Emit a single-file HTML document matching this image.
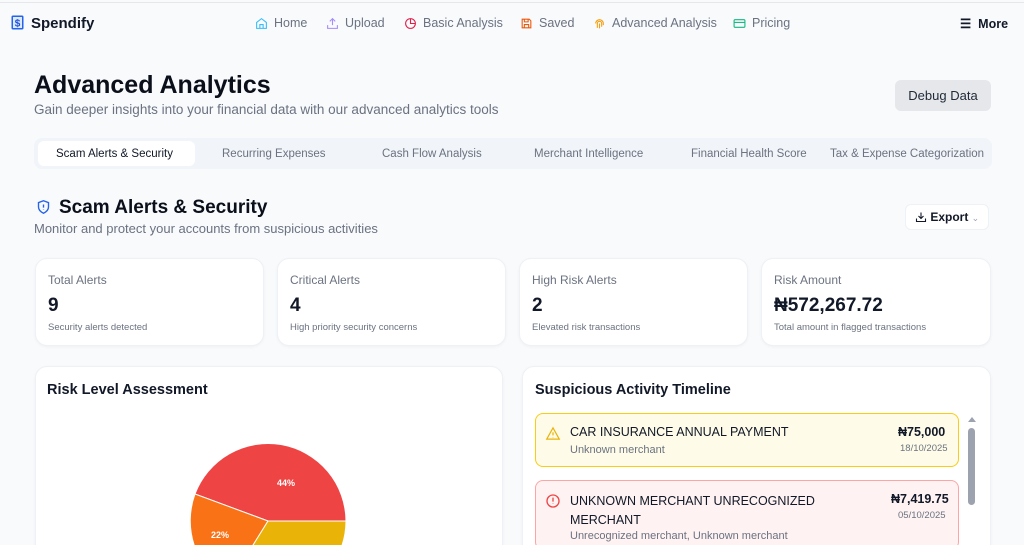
<!DOCTYPE html>
<html style="width:1024px;height:545px;overflow:hidden"><head><meta charset="utf-8"><style>
*{box-sizing:border-box;margin:0;padding:0}
body{width:1024px;height:545px;overflow:hidden;background:#f8fafc;font-family:"Liberation Sans",sans-serif;color:#0f172a;position:relative}
.a{position:absolute;white-space:nowrap}
.nav{font-size:12.5px;color:#6b7280}
.nav svg{vertical-align:-3px;margin-right:6px}
.card{position:absolute;background:#fff;border:1px solid #eef1f5;border-radius:12px;box-shadow:0 1px 3px rgba(0,0,0,.04)}
.card .t{position:absolute;left:12px;top:14px;font-size:12px;color:#6b7280}
.card .v{position:absolute;left:12px;top:36px;font-size:19px;font-weight:bold;color:#111827}
.card .s{position:absolute;left:12px;top:63px;font-size:9.5px;color:#6b7280}
.tab{position:absolute;top:148px;font-size:11.5px;color:#6b7280}
</style></head><body>
<div class="a" style="left:0;top:2px;width:1024px;height:1px;background:#e5e7eb"></div>
<svg class="a" style="left:11px;top:15px" width="13" height="15" viewBox="0 0 13 15"><rect x="0.5" y="0.5" width="12" height="14" rx="1.5" fill="#2563eb"/><rect x="2" y="2" width="9" height="11" fill="#dbeafe"/><text x="6.5" y="11.5" font-size="10" font-weight="bold" text-anchor="middle" fill="#1d4ed8" font-family="Liberation Sans">$</text></svg>
<div class="a" style="left:31px;top:15px;font-size:15px;font-weight:bold;color:#111827">Spendify</div>
<div class="a nav" style="left:255px;top:16px"><svg width="13" height="13" viewBox="0 0 24 24" fill="none" stroke="#38bdf8" stroke-width="2"><path d="M3 10l9-7 9 7v11H3z"/><path d="M9 21v-7h6v7"/></svg>Home</div>
<div class="a nav" style="left:326px;top:16px"><svg width="13" height="13" viewBox="0 0 24 24" fill="none" stroke="#a78bfa" stroke-width="2"><path d="M12 15V3M7 8l5-5 5 5M3 15v6h18v-6"/></svg>Upload</div>
<div class="a nav" style="left:404px;top:16px"><svg width="13" height="13" viewBox="0 0 24 24" fill="none" stroke="#e11d48" stroke-width="2"><circle cx="12" cy="12" r="9"/><path d="M12 3v9h9"/></svg>Basic Analysis</div>
<div class="a nav" style="left:520px;top:16px"><svg width="13" height="13" viewBox="0 0 24 24" fill="none" stroke="#ea580c" stroke-width="2"><path d="M4 4h13l3 3v13H4z"/><path d="M8 4v5h7V4M8 20v-6h8v6"/></svg>Saved</div>
<div class="a nav" style="left:593px;top:16px"><svg width="13" height="13" viewBox="0 0 24 24" fill="none" stroke="#f59e0b" stroke-width="2"><path d="M5 12a7 7 0 0114 0v3M8 20v-8a4 4 0 018 0v6M12 12v9"/></svg>Advanced Analysis</div>
<div class="a nav" style="left:733px;top:16px"><svg width="13" height="13" viewBox="0 0 24 24" fill="none" stroke="#10b981" stroke-width="2"><rect x="2" y="5" width="20" height="14" rx="2"/><path d="M2 10h20"/></svg>Pricing</div>
<div class="a" style="left:960px;top:16px;font-size:12.5px;font-weight:bold;color:#111827">☰&nbsp; More</div>

<div class="a" style="left:34px;top:71px;font-size:25px;font-weight:bold;color:#0b0f1a">Advanced Analytics</div>
<div class="a" style="left:34px;top:102px;font-size:13.5px;color:#6b7280">Gain deeper insights into your financial data with our advanced analytics tools</div>
<div class="a" style="left:895px;top:80px;width:96px;height:31px;background:#e5e7eb;border-radius:6px;font-size:13px;color:#1f2937;text-align:center;line-height:31px">Debug Data</div>

<div class="a" style="left:34px;top:138px;width:958px;height:31px;background:#f1f5f9;border-radius:8px"></div>
<div class="a" style="left:38px;top:141px;width:157px;height:25px;background:#fff;border-radius:6px"></div>
<div class="tab" style="left:56px;color:#111827">Scam Alerts &amp; Security</div>
<div class="tab" style="left:222px">Recurring Expenses</div>
<div class="tab" style="left:382px">Cash Flow Analysis</div>
<div class="tab" style="left:534px">Merchant Intelligence</div>
<div class="tab" style="left:691px">Financial Health Score</div>
<div class="tab" style="left:830px">Tax &amp; Expense Categorization</div>

<svg class="a" style="left:36px;top:199px" width="15" height="16" viewBox="0 0 24 24" fill="none" stroke="#2563eb" stroke-width="2.2"><path d="M12 2l8 3v7c0 5-4 8-8 10-4-2-8-5-8-10V5z"/><path d="M12 8v5M12 16v.5"/></svg>
<div class="a" style="left:59px;top:197px;font-size:19px;font-weight:bold;color:#0b0f1a">Scam Alerts &amp; Security</div>
<div class="a" style="left:34px;top:221px;font-size:13px;color:#6b7280">Monitor and protect your accounts from suspicious activities</div>
<div class="a" style="left:905px;top:204px;width:84px;height:26px;background:#fff;border:1px solid #eef1f5;border-radius:6px;font-size:12px;font-weight:bold;color:#111827;line-height:24px;padding-left:9px"><svg width="12" height="12" viewBox="0 0 24 24" fill="none" stroke="#111827" stroke-width="2.2" style="vertical-align:-2px"><path d="M12 3v12M7 10l5 5 5-5M3 15v6h18v-6"/></svg> Export <span style="color:#9ca3af;font-weight:normal;font-size:9px">&#8964;</span></div>

<div class="card" style="left:35px;top:258px;width:229px;height:88px"><div class="t">Total Alerts</div><div class="v">9</div><div class="s">Security alerts detected</div></div>
<div class="card" style="left:277px;top:258px;width:229px;height:88px"><div class="t">Critical Alerts</div><div class="v">4</div><div class="s">High priority security concerns</div></div>
<div class="card" style="left:519px;top:258px;width:229px;height:88px"><div class="t">High Risk Alerts</div><div class="v">2</div><div class="s">Elevated risk transactions</div></div>
<div class="card" style="left:761px;top:258px;width:230px;height:88px"><div class="t">Risk Amount</div><div class="v">₦572,267.72</div><div class="s">Total amount in flagged transactions</div></div>

<div class="card" style="left:35px;top:366px;width:468px;height:190px"></div>
<div class="a" style="left:47px;top:382px;font-size:14.5px;font-weight:bold;color:#111827">Risk Level Assessment</div>
<svg class="a" style="left:150px;top:420px" width="240" height="125" viewBox="150 420 240 125">
<path d="M268 521 L346 521 A78 78 0 0 0 195 494 Z" fill="#ef4444" stroke="#fff" stroke-width="1"/>
<path d="M268 521 L195 494 A78 78 0 0 0 227 587 Z" fill="#f97316" stroke="#fff" stroke-width="1"/>
<path d="M268 521 L227 587 A78 78 0 0 0 346 521 Z" fill="#eab308" stroke="#fff" stroke-width="1"/>
<text x="286" y="486" font-size="9" font-weight="bold" fill="#fff" text-anchor="middle" font-family="Liberation Sans">44%</text>
<text x="220" y="538" font-size="9" font-weight="bold" fill="#fff" text-anchor="middle" font-family="Liberation Sans">22%</text>
</svg>

<div class="card" style="left:522px;top:366px;width:469px;height:190px"></div>
<div class="a" style="left:535px;top:382px;font-size:14.5px;font-weight:bold;color:#111827">Suspicious Activity Timeline</div>
<div class="a" style="left:535px;top:413px;width:424px;height:54px;background:#fefce8;border:1px solid #facc15;border-radius:8px"></div>
<svg class="a" style="left:545px;top:426px" width="16" height="15" viewBox="0 0 24 24" fill="none" stroke="#eab308" stroke-width="2"><path d="M12 3L2 21h20z"/><path d="M12 10v5M12 18v.5"/></svg>
<div class="a" style="left:570px;top:425px;font-size:12.5px;color:#111827">CAR INSURANCE ANNUAL PAYMENT</div>
<div class="a" style="left:570px;top:444px;font-size:11px;color:#6b7280">Unknown merchant</div>
<div class="a" style="left:898px;top:425px;font-size:12.5px;font-weight:bold;color:#111827">₦75,000</div>
<div class="a" style="left:900px;top:443px;font-size:9.5px;color:#6b7280">18/10/2025</div>

<div class="a" style="left:535px;top:480px;width:424px;height:70px;background:#fef2f2;border:1px solid #fca5a5;border-radius:8px"></div>
<svg class="a" style="left:545px;top:493px" width="16" height="16" viewBox="0 0 24 24" fill="none" stroke="#ef4444" stroke-width="2"><circle cx="12" cy="12" r="9"/><path d="M12 7v6M12 16v.5"/></svg>
<div class="a" style="left:570px;top:492px;font-size:12.5px;color:#111827;line-height:19px">UNKNOWN MERCHANT UNRECOGNIZED<br>MERCHANT</div>
<div class="a" style="left:570px;top:530px;font-size:11px;color:#6b7280">Unrecognized merchant, Unknown merchant</div>
<div class="a" style="left:891px;top:492px;font-size:12.5px;font-weight:bold;color:#111827">₦7,419.75</div>
<div class="a" style="left:898px;top:510px;font-size:9.5px;color:#6b7280">05/10/2025</div>

<div class="a" style="left:968px;top:417px;width:0;height:0;border-left:4px solid transparent;border-right:4px solid transparent;border-bottom:5px solid #9ca3af"></div>
<div class="a" style="left:968px;top:428px;width:7px;height:77px;background:#9ca3af;border-radius:4px"></div>
</body></html>
